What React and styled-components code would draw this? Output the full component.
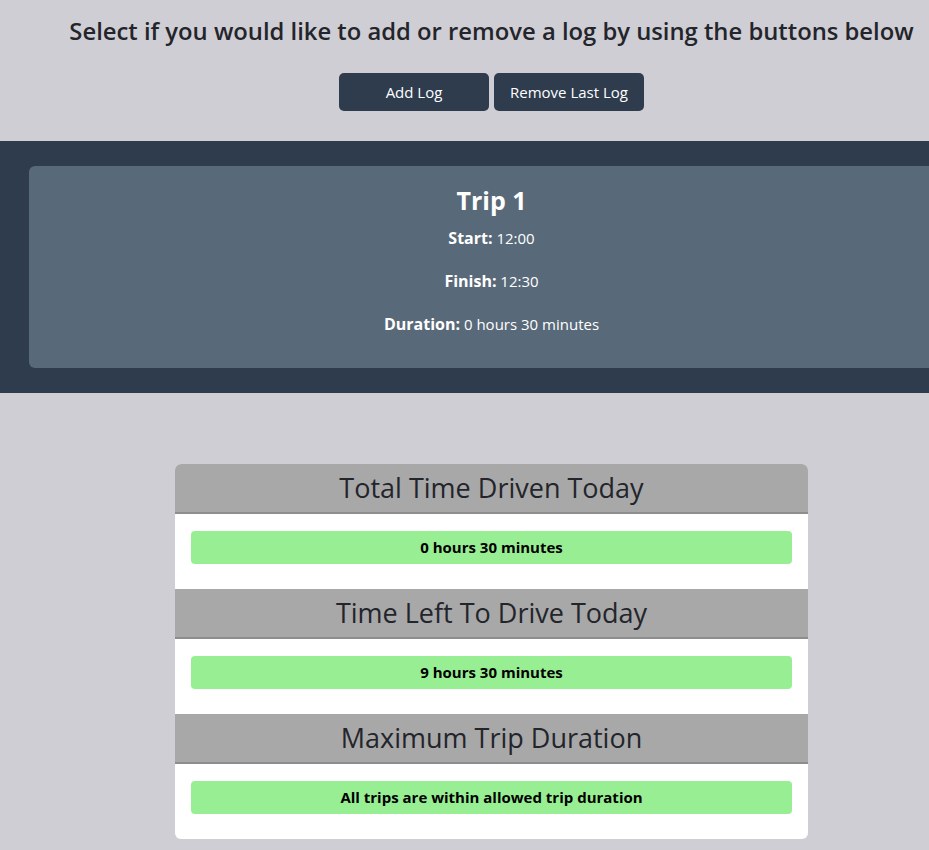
import React from "react";
import styled, { createGlobalStyle } from "styled-components";

const GlobalStyle = createGlobalStyle`
  html, body {
    margin: 0;
    padding: 0;
    background: #cfced4;
    overflow-x: hidden;
  }
  body {
    font-family: "Open Sans", "Noto Sans", sans-serif;
  }
`;

const Page = styled.div`
  width: 983px;
  background: #cfced4;
  padding-bottom: 40px;
`;

const Top = styled.section`
  display: flex;
  flex-direction: column;
  align-items: center;
  padding: 15px 0 30px;
`;

const Heading = styled.h1`
  margin: 0;
  font-size: 23.8px;
  line-height: 32px;
  font-weight: 600;
  color: #23252b;
`;

const ButtonRow = styled.div`
  display: flex;
  gap: 5px;
  margin-top: 26px;
`;

const Button = styled.button`
  width: 150px;
  height: 38px;
  border: none;
  border-radius: 5px;
  background: #2e3c4e;
  color: #fff;
  font-family: inherit;
  font-size: 15px;
  cursor: pointer;
`;

const Band = styled.section`
  background: #2e3c4e;
  padding: 25px 29px;
`;

const TripCard = styled.div`
  background: #586979;
  border-radius: 6px;
  height: 202px;
  box-sizing: border-box;
  padding-top: 17px;
  color: #fff;
  text-align: center;
`;

const TripTitle = styled.h2`
  margin: 0 0 10px;
  font-size: 25px;
  line-height: 34px;
  font-weight: 700;
`;

const TripLine = styled.p`
  margin: 0 0 21px;
  font-size: 15px;
  line-height: 22px;

  strong {
    font-size: 16px;
    font-weight: 700;
  }
`;

const Summary = styled.div`
  width: 633px;
  margin: 71px auto 0;
  background: #fff;
  border-radius: 6px;
  overflow: hidden;
`;

const SectionHeader = styled.h3`
  margin: 0;
  height: 48px;
  line-height: 48px;
  background: #a8a8a8;
  border-bottom: 2px solid #8d8d8d;
  text-align: center;
  font-size: 27px;
  font-weight: 500;
  color: #23252b;
`;

const SectionBody = styled.div`
  padding: 17px 16px 25px;
`;

const Result = styled.div`
  height: 33px;
  line-height: 33px;
  border-radius: 4px;
  background: ${(p) => (p.$ok ? "#98ef93" : "#f09a9a")};
  text-align: center;
  font-size: 15px;
  font-weight: 700;
  color: #000;
`;

const sections = [
  { title: "Total Time Driven Today", value: "0 hours 30 minutes" },
  { title: "Time Left To Drive Today", value: "9 hours 30 minutes" },
  {
    title: "Maximum Trip Duration",
    value: "All trips are within allowed trip duration",
  },
];

export default function App() {
  return (
    <Page>
      <GlobalStyle />
      <Top>
        <Heading>
          Select if you would like to add or remove a log by using the buttons
          below
        </Heading>
        <ButtonRow>
          <Button>Add Log</Button>
          <Button>Remove Last Log</Button>
        </ButtonRow>
      </Top>
      <Band>
        <TripCard>
          <TripTitle>Trip 1</TripTitle>
          <TripLine>
            <strong>Start:</strong> 12:00
          </TripLine>
          <TripLine>
            <strong>Finish:</strong> 12:30
          </TripLine>
          <TripLine>
            <strong>Duration:</strong> 0 hours 30 minutes
          </TripLine>
        </TripCard>
      </Band>
      <Summary>
        {sections.map((s) => (
          <div key={s.title}>
            <SectionHeader>{s.title}</SectionHeader>
            <SectionBody>
              <Result $ok>{s.value}</Result>
            </SectionBody>
          </div>
        ))}
      </Summary>
    </Page>
  );
}
